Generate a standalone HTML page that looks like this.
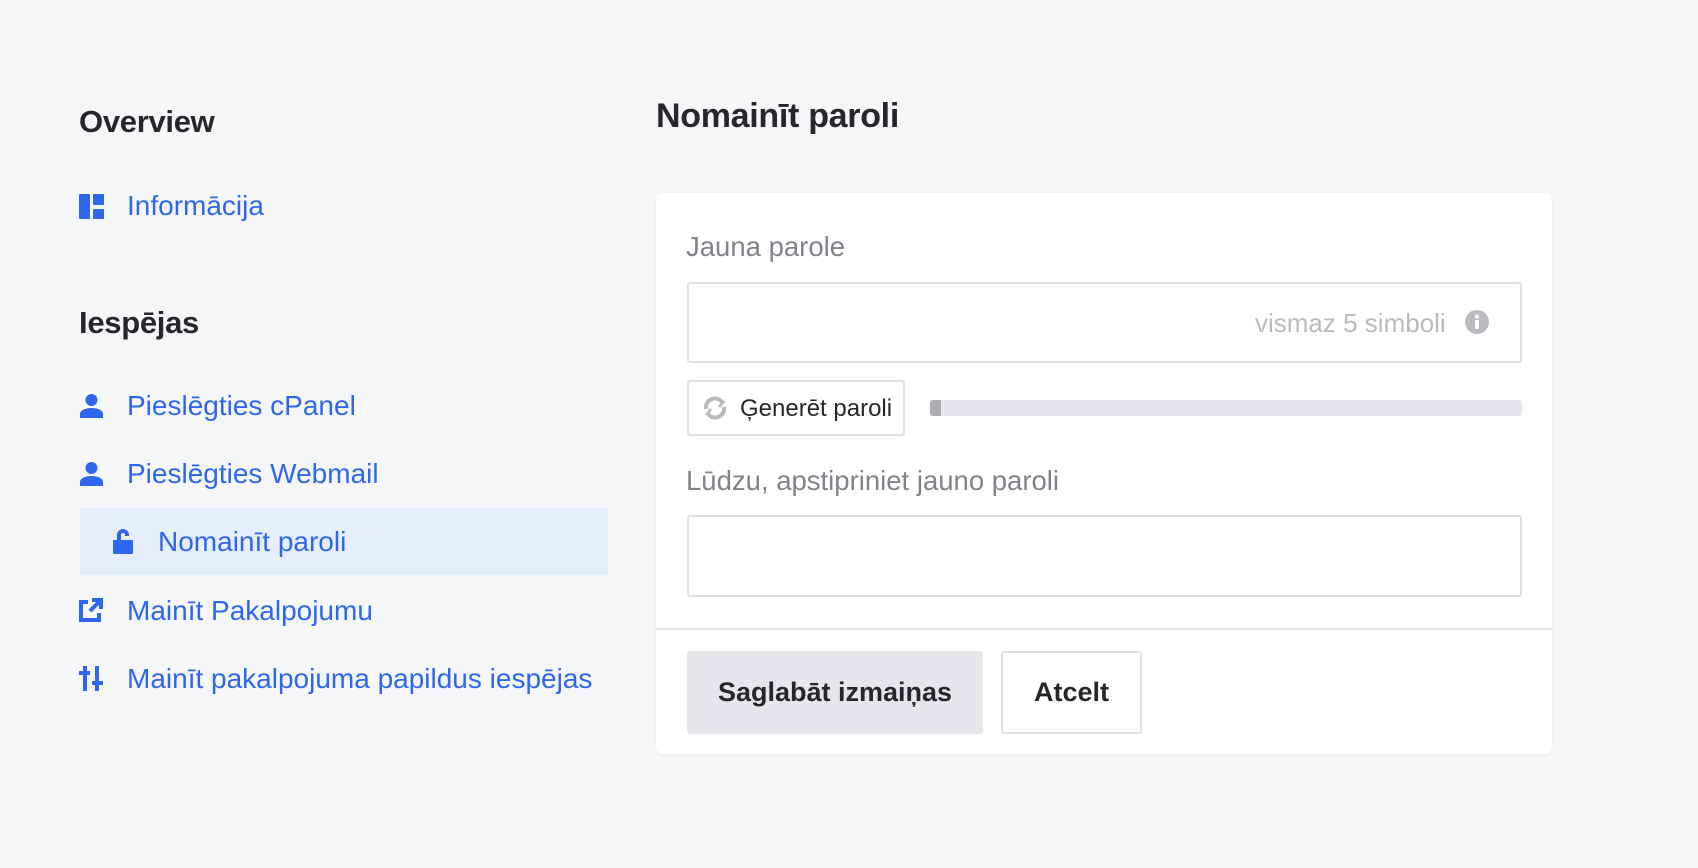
<!DOCTYPE html>
<html><head><meta charset="utf-8"><style>
*{margin:0;padding:0;box-sizing:border-box}
body{width:1698px;height:868px;background:#f5f6f8;font-family:"Liberation Sans",sans-serif;position:relative;overflow:hidden}
.a{position:absolute;white-space:nowrap}
.h{color:#25272b;font-size:31px;font-weight:bold;letter-spacing:-0.3px}
.l{color:#2f66ee;font-size:28px;line-height:32px}
.ic{position:absolute}
.card{position:absolute;left:656px;top:193px;width:896px;height:561px;background:#fff;border-radius:7px;box-shadow:0 1px 3px rgba(0,0,0,0.04)}
.lab{color:#80838a;font-size:27.5px}
.inp{position:absolute;border:2px solid #dfe1e5;border-radius:3px;background:#fff}
</style></head><body>
<div class="a h" style="left:79px;top:104px">Overview</div>
<svg class="ic" style="left:79px;top:194px" width="25" height="25" viewBox="0 0 25 25" fill="#2f66ee"><rect x="0" y="0" width="11" height="25" rx="1"/><rect x="14" y="0" width="11" height="11" rx="1"/><rect x="14" y="15" width="11" height="10" rx="1"/></svg>
<div class="a l" style="left:127px;top:190px">Informācija</div>

<div class="a h" style="left:79px;top:305px">Iespējas</div>
<svg class="ic" style="left:80px;top:394px" width="23" height="24" viewBox="0 0 23 24" fill="#2f66ee"><circle cx="11.5" cy="6" r="6"/><path d="M0 24v-4c0-4 6-6 11.5-6S23 16 23 20v4z"/></svg>
<div class="a l" style="left:127px;top:390px">Pieslēgties cPanel</div>
<svg class="ic" style="left:80px;top:462px" width="23" height="24" viewBox="0 0 23 24" fill="#2f66ee"><circle cx="11.5" cy="6" r="6"/><path d="M0 24v-4c0-4 6-6 11.5-6S23 16 23 20v4z"/></svg>
<div class="a l" style="left:127px;top:458px">Pieslēgties Webmail</div>
<div class="a" style="left:80px;top:508px;width:528px;height:67px;background:#e6eefb"></div>
<svg class="ic" style="left:113px;top:529px" width="20" height="25" viewBox="0 0 20 25" fill="#2f66ee"><path d="M4 11V6a6 6 0 0 1 12 0v1h-4V6a2 2 0 0 0-4 0v5z"/><rect x="0" y="11" width="20" height="14" rx="1"/></svg>
<div class="a l" style="left:158px;top:526px">Nomainīt paroli</div>
<svg class="ic" style="left:79px;top:598px" width="24" height="24" viewBox="0 0 24 24" fill="none" stroke="#2f66ee" stroke-width="4"><path d="M9 4H2v18h18v-7"/><path d="M11 13L21 3M13 2h9v9" /></svg>
<div class="a l" style="left:127px;top:595px">Mainīt Pakalpojumu</div>
<svg class="ic" style="left:79px;top:666px" width="24" height="25" viewBox="0 0 24 25" fill="#2f66ee"><rect x="4" y="0" width="4" height="25"/><rect x="0" y="5" width="11" height="4"/><rect x="16" y="0" width="4" height="25"/><rect x="13" y="15" width="11" height="4"/></svg>
<div class="a l" style="left:127px;top:663px">Mainīt pakalpojuma papildus iespējas</div>

<div class="a h" style="left:656px;top:97px;font-size:34px">Nomainīt paroli</div>
<div class="card"></div>
<div class="a lab" style="left:686px;top:231px">Jauna parole</div>
<div class="inp" style="left:687px;top:282px;width:835px;height:81px"></div>
<div class="a" style="left:1255px;top:308px;color:#b9bbc0;font-size:26px">vismaz 5 simboli</div>
<svg class="ic" style="left:1465px;top:310px" width="24" height="24" viewBox="0 0 24 24"><circle cx="12" cy="12" r="12" fill="#b9bbc0"/><rect x="10" y="10" width="4" height="9" fill="#fff"/><circle cx="12" cy="6.5" r="2.2" fill="#fff"/></svg>
<div class="inp" style="left:687px;top:380px;width:218px;height:56px"></div>
<svg class="ic" style="left:702px;top:395px" width="26" height="26" viewBox="0 0 26 26" fill="none" stroke="#b9bbc0" stroke-width="4"><path d="M4 14A9 9 0 0 1 20 7"/><path d="M22 12A9 9 0 0 1 6 19"/><path d="M15 3l6 4-4 5" stroke-width="3"/><path d="M11 23l-6-4 4-5" stroke-width="3"/></svg>
<div class="a" style="left:740px;top:395px;color:#25272b;font-size:24px">Ģenerēt paroli</div>
<div class="a" style="left:930px;top:400px;width:592px;height:16px;background:#e6e7ea;border-radius:3px"></div>
<div class="a" style="left:930px;top:400px;width:11px;height:16px;background:#abadb2;border-radius:3px 0 0 3px"></div>
<div class="a lab" style="left:686px;top:465px">Lūdzu, apstipriniet jauno paroli</div>
<div class="inp" style="left:687px;top:515px;width:835px;height:82px"></div>
<div class="a" style="left:656px;top:628px;width:896px;height:2px;background:#e6e7ea"></div>
<div class="a" style="left:687px;top:651px;width:296px;height:83px;background:#e6e7ea;border-radius:3px;color:#25272b;font-size:27px;font-weight:bold;text-align:center;line-height:83px">Saglabāt izmaiņas</div>
<div class="a" style="left:1001px;top:651px;width:141px;height:83px;border:2px solid #dfe1e5;border-radius:3px;background:#fff;color:#25272b;font-size:27px;font-weight:bold;text-align:center;line-height:79px">Atcelt</div>
</body></html>
